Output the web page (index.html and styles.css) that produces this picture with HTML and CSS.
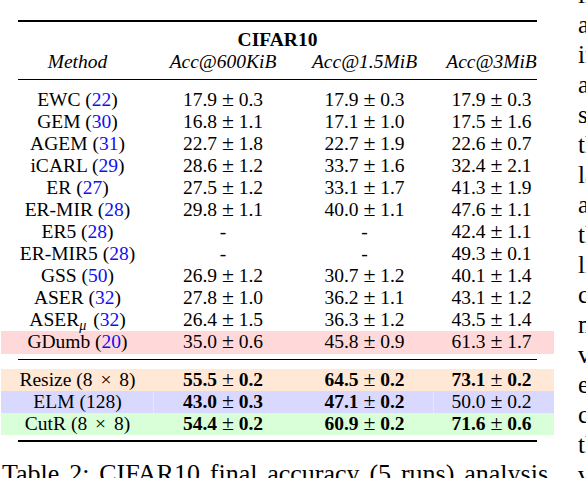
FILE: index.html
```html
<!DOCTYPE html>
<html lang="en">
<head>
    <meta charset="UTF-8">
    <meta name="viewport" content="width=device-width, initial-scale=1.0">
    <title>Table 2: CIFAR10 final accuracy</title>
    <link rel="stylesheet" href="styles.css">
</head>
<body>
    <div class="page">
        <div class="left-col">
            <div class="results">
                <div class="rule heavy top"></div>
                <div class="row head"><span class="all">CIFAR10</span></div>
                <div class="row labels">
                    <span>Method</span><span>Acc@600KiB</span><span>Acc@1.5MiB</span><span>Acc@3MiB</span>
                </div>
                <div class="rule light after-head"></div>

                <!-- baselines -->
                <div class="row"><span>EWC (<a class="cite">22</a>)</span><span>17.9 <i class="pm">±</i> 0.3</span><span>17.9 <i class="pm">±</i> 0.3</span><span>17.9 <i class="pm">±</i> 0.3</span></div>
                <div class="row"><span>GEM (<a class="cite">30</a>)</span><span>16.8 <i class="pm">±</i> 1.1</span><span>17.1 <i class="pm">±</i> 1.0</span><span>17.5 <i class="pm">±</i> 1.6</span></div>
                <div class="row"><span>AGEM (<a class="cite">31</a>)</span><span>22.7 <i class="pm">±</i> 1.8</span><span>22.7 <i class="pm">±</i> 1.9</span><span>22.6 <i class="pm">±</i> 0.7</span></div>
                <div class="row"><span>iCARL (<a class="cite">29</a>)</span><span>28.6 <i class="pm">±</i> 1.2</span><span>33.7 <i class="pm">±</i> 1.6</span><span>32.4 <i class="pm">±</i> 2.1</span></div>
                <div class="row"><span>ER (<a class="cite">27</a>)</span><span>27.5 <i class="pm">±</i> 1.2</span><span>33.1 <i class="pm">±</i> 1.7</span><span>41.3 <i class="pm">±</i> 1.9</span></div>
                <div class="row"><span>ER-MIR (<a class="cite">28</a>)</span><span>29.8 <i class="pm">±</i> 1.1</span><span>40.0 <i class="pm">±</i> 1.1</span><span>47.6 <i class="pm">±</i> 1.1</span></div>
                <div class="row"><span>ER5 (<a class="cite">28</a>)</span><span>-</span><span>-</span><span>42.4 <i class="pm">±</i> 1.1</span></div>
                <div class="row"><span>ER-MIR5 (<a class="cite">28</a>)</span><span>-</span><span>-</span><span>49.3 <i class="pm">±</i> 0.1</span></div>
                <div class="row"><span>GSS (<a class="cite">50</a>)</span><span>26.9 <i class="pm">±</i> 1.2</span><span>30.7 <i class="pm">±</i> 1.2</span><span>40.1 <i class="pm">±</i> 1.4</span></div>
                <div class="row"><span>ASER (<a class="cite">32</a>)</span><span>27.8 <i class="pm">±</i> 1.0</span><span>36.2 <i class="pm">±</i> 1.1</span><span>43.1 <i class="pm">±</i> 1.2</span></div>
                <div class="row"><span>ASER<sub class="mu">μ</sub> (<a class="cite">32</a>)</span><span>26.4 <i class="pm">±</i> 1.5</span><span>36.3 <i class="pm">±</i> 1.2</span><span>43.5 <i class="pm">±</i> 1.4</span></div>
                <div class="row band gdumb"><span>GDumb (<a class="cite">20</a>)</span><span>35.0 <i class="pm">±</i> 0.6</span><span>45.8 <i class="pm">±</i> 0.9</span><span>61.3 <i class="pm">±</i> 1.7</span></div>
                <div class="rule light after-base"></div>

                <!-- ours -->
                <div class="row band resize"><span>Resize (8 <i class="times">×</i> 8)</span><span><b>55.5</b> <i class="pm">±</i> <b>0.2</b></span><span><b>64.5</b> <i class="pm">±</i> <b>0.2</b></span><span><b>73.1</b> <i class="pm">±</i> <b>0.2</b></span></div>
                <div class="row band elm"><span>ELM (128)</span><span><b>43.0</b> <i class="pm">±</i> <b>0.3</b></span><span><b>47.1</b> <i class="pm">±</i> <b>0.2</b></span><span>50.0 <i class="pm">±</i> 0.2</span></div>
                <div class="row band cutr"><span>CutR (8 <i class="times">×</i> 8)</span><span><b>54.4</b> <i class="pm">±</i> <b>0.2</b></span><span><b>60.9</b> <i class="pm">±</i> <b>0.2</b></span><span><b>71.6</b> <i class="pm">±</i> <b>0.6</b></span></div>
                <div class="rule heavy bottom"></div>
            </div>
            <p class="caption">Table 2: CIFAR10 final accuracy (5 runs) analysis</p>
        </div>

        <div class="right-col">
            <p>limited</p>
            <p>and</p>
            <p>in</p>
            <p>as</p>
            <p>samples</p>
            <p>the</p>
            <p>larger</p>
            <p>accuracy</p>
            <p>the</p>
            <p>limited</p>
            <p>compression</p>
            <p>memory</p>
            <p>very</p>
            <p>even</p>
            <p>constant</p>
            <p>the</p>
            <p>very</p>
        </div>
    </div>
</body>
</html>
```

FILE: styles.css
```css
html, body {
    margin: 0;
    background: #fff;
}

body {
    font-family: "Liberation Serif", "Times New Roman", serif;
    color: #000;
}

.page {
    display: flex;
    width: 586px;
    height: 478px;
    overflow: hidden;
}

.left-col {
    flex: 0 0 578px;
}

.results {
    width: 553px;
    margin: 20px 0 0 1px;
    font-size: 19.5px;
}

.rule {
    margin: 0 17px;
    background: #000;
}
.rule.heavy { height: 2px; }
.rule.light { height: 1px; }
.rule.top { margin-bottom: 7px; }
.rule.after-head { margin-top: 6px; margin-bottom: 9px; }
.rule.after-base { margin-top: 5px; margin-bottom: 9px; }
.rule.bottom { margin-top: 5px; }

.row {
    display: grid;
    grid-template-columns: 119px 172px 137px 91px;
    padding: 0 17px;
    line-height: 22px;
    text-align: center;
    white-space: nowrap;
}

.row > span:nth-child(3) {
    padding-right: 26px;
}

.head .all {
    grid-column: 1 / 5;
    font-weight: bold;
}

.labels {
    font-style: italic;
}

.cite {
    color: #1010f0;
}

.pm, .times {
    font-style: normal;
    font-weight: normal;
    line-height: 0;
}

.pm {
    font-size: 1.12em;
}

.times {
    margin: 0 3px;
}

.mu {
    font-style: italic;
    font-size: 0.72em;
    line-height: 0;
    vertical-align: -0.3em;
    margin-right: 2px;
}

.band.gdumb { background: #ffd9d9; padding-bottom: 1px; }
.band.resize { background: #ffe8d6; }
.band.cutr { background: #d9ffd9; }

/* cell colour seams */
.band.elm {
    background:
        linear-gradient(to right, transparent 152px, #e6e6ff 152px, #e6e6ff 153px, transparent 153px,
            transparent 432px, #e6e6ff 432px, #e6e6ff 433px, transparent 433px),
        #d9d9ff;
}

.caption {
    width: 546px;
    margin: 16px 0 0 2px;
    font-size: 26px;
    line-height: 31px;
    text-align: justify;
    text-align-last: justify;
}

.right-col {
    flex: 0 0 300px;
    margin-top: -20px;
    font-size: 25px;
}

.right-col p {
    margin: 0;
    line-height: 30px;
}
```
